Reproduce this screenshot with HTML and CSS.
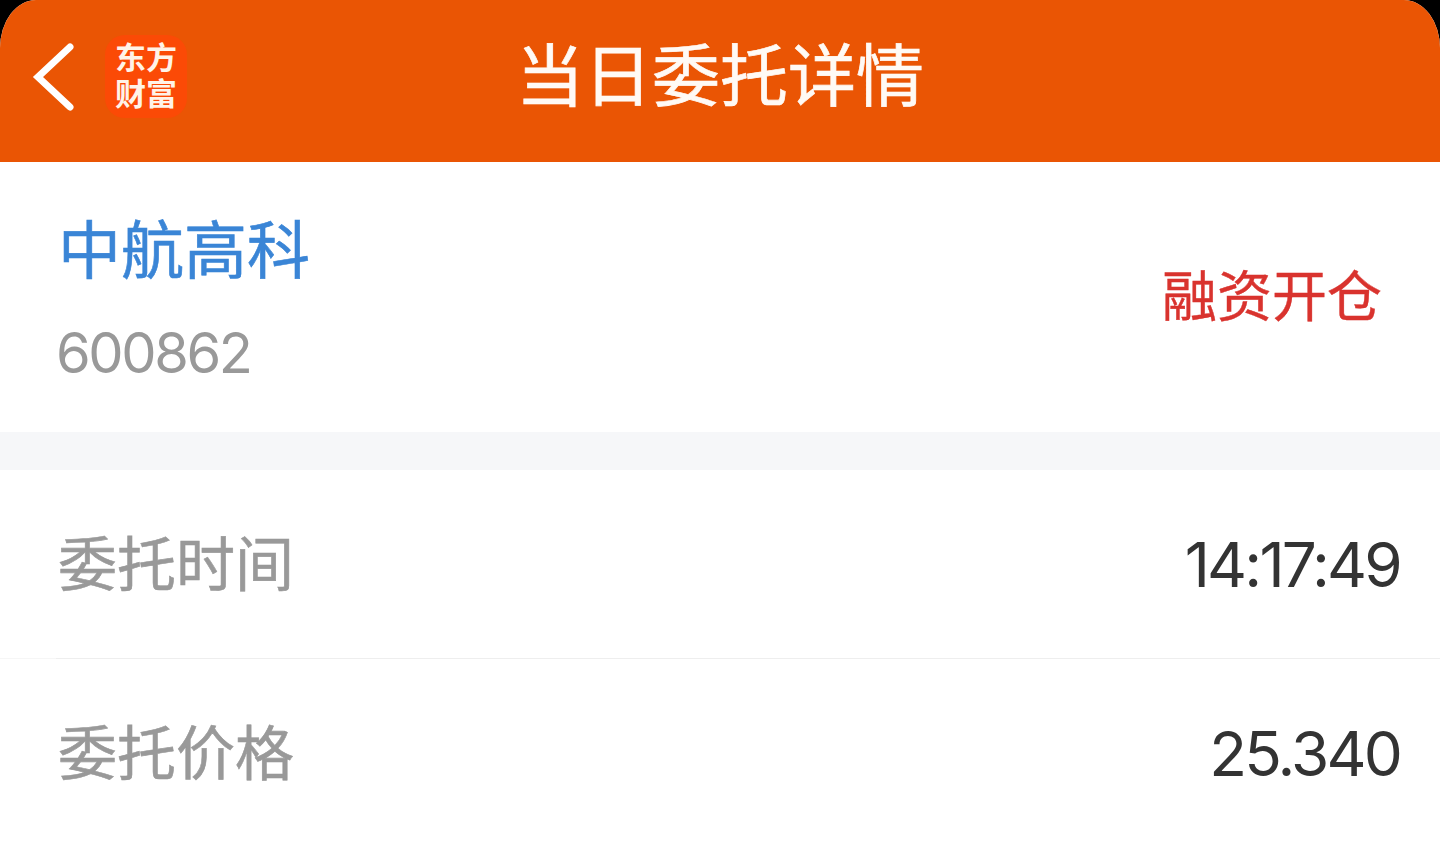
FILE: index.html
```html
<!DOCTYPE html>
<html lang="zh-CN">
<head>
    <meta charset="UTF-8">
    <meta name="viewport" content="width=device-width, initial-scale=1.0">
    <title>当日委托详情</title>
    <link rel="stylesheet" href="styles.css">
</head>
<body>
    <div class="app">
        <header class="topbar">
            <div class="topbar-left">
                <svg class="back-icon" width="44" height="70" viewBox="0 0 44 70">
                    <path d="M38 5 L6 35 L38 65" fill="none" stroke="#fff" stroke-width="7" stroke-linecap="round" stroke-linejoin="miter"/>
                </svg>
                <div class="logo">东方财富</div>
            </div>
            <h1 class="title">当日委托详情</h1>
        </header>

        <section class="stock">
            <div class="stock-info">
                <div class="stock-name">中航高科</div>
                <div class="stock-code">600862</div>
            </div>
            <div class="stock-type">融资开仓</div>
        </section>

        <div class="divider"></div>

        <section class="details">
            <div class="detail-row">
                <div class="detail-inner">
                    <span class="detail-label">委托时间</span>
                    <span class="detail-value">14:17:49</span>
                </div>
            </div>
            <div class="detail-row">
                <div class="detail-inner">
                    <span class="detail-label">委托价格</span>
                    <span class="detail-value">25.340</span>
                </div>
            </div>
        </section>
    </div>
</body>
</html>
```

FILE: styles.css
```css
html, body {
    margin: 0;
    padding: 0;
    height: 100%;
    background-color: #000;
    overflow: hidden;
}
body {
    font-family: Inter, "Noto Sans CJK SC", sans-serif;
}
.app {
    height: 845px;
    background-color: #fff;
    border-radius: 36px 36px 0 0 / 48px 48px 0 0;
    overflow: hidden;
}
.topbar {
    height: 162px;
    box-sizing: border-box;
    padding-bottom: 18px;
    background-color: #ea5504;
    display: flex;
    align-items: center;
    justify-content: center;
    position: relative;
}
.topbar-left {
    position: absolute;
    left: 32px;
    top: 35px;
    display: flex;
    align-items: center;
    gap: 29px;
}
.back-icon { display: block; }
.logo {
    width: 82px;
    height: 83px;
    box-sizing: border-box;
    padding: 0 10px 6px;
    background-color: #fb4a06;
    border-radius: 20px;
    color: #fff3e8;
    font-family: "Noto Sans CJK SC", sans-serif;
    font-weight: 700;
    font-size: 31px;
    line-height: 36px;
    text-align: center;
    display: flex;
    align-items: center;
}
.title {
    margin: 0;
    color: #fffaf5;
    font-family: "Noto Sans CJK SC", sans-serif;
    font-size: 68px;
    font-weight: 400;
    line-height: 1;
    -webkit-text-stroke: 0.7px #fffaf5;
}
.stock {
    height: 270px;
    box-sizing: border-box;
    padding: 0 58px;
    display: flex;
    align-items: center;
    justify-content: space-between;
}
.stock-info { padding-bottom: 8px; }
.stock-name {
    color: #3a85d6;
    font-family: "Noto Sans CJK SC", sans-serif;
    font-size: 63px;
    line-height: 90px;
    -webkit-text-stroke: 0.6px #3a85d6;
}
.stock-code {
    color: #999;
    font-size: 56px;
    letter-spacing: -2.4px;
    line-height: 66px;
    margin: 29px 0 0 -2px;
}
.stock-type {
    color: #d9332e;
    font-family: "Noto Sans CJK SC", sans-serif;
    font-size: 55px;
    margin-bottom: 10px;
    -webkit-text-stroke: 0.4px #d9332e;
}
.divider {
    height: 38px;
    background-color: #f6f7f9;
}
.detail-row {
    height: 189px;
    box-sizing: border-box;
    border-bottom: 1px solid #f6f6f6;
}
.detail-row:last-child { border-bottom: none; }
.detail-inner {
    height: 100%;
    margin-left: 56px;
    padding: 0 40px 0 2px;
    border-bottom: 1px solid #eeeeee;
    display: flex;
    align-items: center;
    justify-content: space-between;
}
.detail-row:last-child .detail-inner { border-bottom: none; }
.detail-label {
    color: #999;
    font-family: "Noto Sans CJK SC", sans-serif;
    font-size: 59px;
    margin-bottom: 8px;
    -webkit-text-stroke: 0.6px #999;
}
.detail-value {
    color: #333;
    font-size: 62px;
    letter-spacing: -2.8px;
}
```
